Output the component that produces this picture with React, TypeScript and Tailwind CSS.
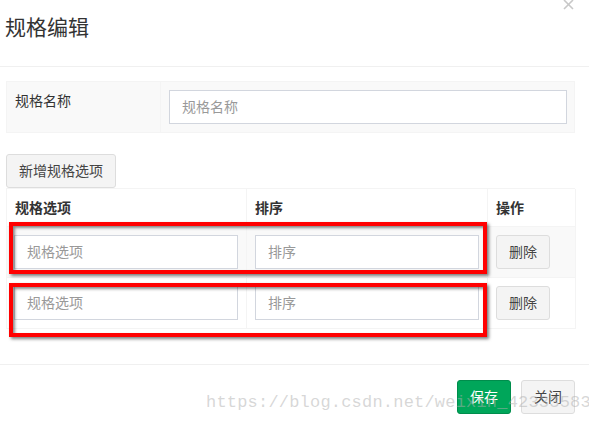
export default function App() {
  const rows = [0, 1];
  return (
    <div className="relative w-[589px] h-[425px] overflow-hidden bg-white text-[14px] text-[#333] font-['Liberation_Sans','Noto_Sans_CJK_SC',sans-serif]">
      {/* header */}
      <div className="h-[67px] border-b border-[#f0f0f0] pl-[5px] pt-[12px]">
        <h4 className="text-[21px] leading-[32px] font-normal text-[#333]">规格编辑</h4>
      </div>
      <svg className="absolute left-[563px] top-0" width="11" height="10" viewBox="0 0 11 10">
        <path d="M1 0 L10 9 M10 0 L1 9" stroke="#c8c8c8" strokeWidth="1.6" />
      </svg>

      {/* body */}
      <div className="pl-[6px] pr-[14px]">
        <div className="mt-[14px] flex h-[52px] border border-[#f4f4f4] bg-[#f9f9f9]">
          <div className="w-[154px] border-r border-[#f4f4f4] pl-[8px] pt-[9px] leading-[20px]">规格名称</div>
          <div className="flex-1 pl-[8px] pr-[7px] pt-[8px]">
            <div className="h-[34px] border border-[#d2d6de] bg-white px-[12px] leading-[32px] text-[#999]">规格名称</div>
          </div>
        </div>

        <button className="mt-[21px] h-[34px] rounded-[3px] border border-[#ddd] bg-[#f4f4f4] px-[12px] text-[14px] text-[#444]">
          新增规格选项
        </button>

        <div className="border-l border-t border-[#f4f4f4]">
          <div className="grid grid-cols-[240px_241px_88px] h-[38px] font-bold">
            <div className="border-r border-b border-[#f4f4f4] pl-[8px] pt-[9px] leading-[20px]">规格选项</div>
            <div className="border-r border-b border-[#f4f4f4] pl-[8px] pt-[9px] leading-[20px]">排序</div>
            <div className="border-r border-b border-[#f4f4f4] pl-[8px] pt-[9px] leading-[20px]">操作</div>
          </div>
          {rows.map((r) => (
            <div key={r} className={`grid grid-cols-[240px_241px_88px] h-[51px] ${r === 0 ? "bg-[#f9f9f9]" : "bg-white"}`}>
              <div className="border-r border-b border-[#f4f4f4] pl-[7px] pr-[8px] pt-[8px]">
                <div className="h-[34px] border border-[#d2d6de] bg-white px-[12px] leading-[32px] text-[#999]">规格选项</div>
              </div>
              <div className="border-r border-b border-[#f4f4f4] pl-[8px] pr-[8px] pt-[8px]">
                <div className="h-[34px] border border-[#d2d6de] bg-white px-[12px] leading-[32px] text-[#999]">排序</div>
              </div>
              <div className="border-r border-b border-[#f4f4f4] pl-[8px] pt-[8px]">
                <button className="h-[34px] w-[54px] rounded-[3px] border border-[#ddd] bg-[#f4f4f4] text-[14px] text-[#444]">删除</button>
              </div>
            </div>
          ))}
        </div>
      </div>

      {/* footer */}
      <div className="mt-[35px] flex justify-end gap-[10px] border-t border-[#f0f0f0] pr-[14px] pt-[15px]">
        <button className="h-[34px] w-[54px] rounded-[3px] border border-[#008d4c] bg-[#00a65a] text-[14px] text-white">保存</button>
        <button className="h-[34px] w-[54px] rounded-[3px] border border-[#ddd] bg-[#f4f4f4] text-[14px] text-[#444]">关闭</button>
      </div>

      {/* annotation boxes */}
      <div className="absolute left-[9px] top-[222px] h-[52px] w-[478px] border-4 border-[#ff0000] shadow-[2px_2px_3px_rgba(0,0,0,0.5),inset_2px_2px_3px_rgba(0,0,0,0.45)]" />
      <div className="absolute left-[9px] top-[283px] h-[54px] w-[478px] border-4 border-[#ff0000] shadow-[2px_2px_3px_rgba(0,0,0,0.5),inset_2px_2px_3px_rgba(0,0,0,0.45)]" />

      {/* watermark */}
      <div className="absolute left-[206px] top-[392px] whitespace-nowrap text-[17px] leading-[22px] tracking-[0.2px] text-[rgba(175,175,175,0.5)] font-['Liberation_Mono',monospace]">
        https://blog.csdn.net/weixin_42333583
      </div>
    </div>
  );
}
